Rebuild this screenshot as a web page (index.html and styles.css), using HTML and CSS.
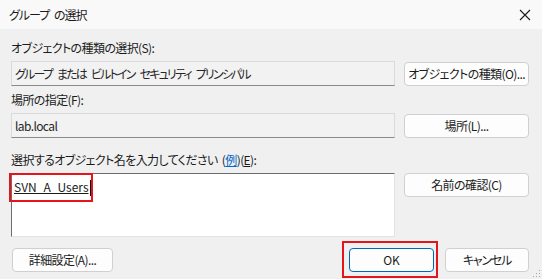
FILE: index.html
```html
<!DOCTYPE html>
<html>
<head>
    <title>グループ の選択</title>
    <link rel="stylesheet" href="styles.css">
</head>
<body>
    <div class="titlebar">
        <span class="title">グループ の選択</span>
        <svg class="close" width="12" height="12" viewBox="0 0 12 12">
            <path d="M1 1 L11 11 M11 1 L1 11" stroke="#1b1b1b" stroke-width="1.1" fill="none"/>
        </svg>
    </div>

    <div class="main">
        <div class="group">
            <div class="label">オブジェクトの種類の選択(S):</div>
            <div class="row">
                <div class="field kana">グループ または ビルトイン セキュリティ プリンシパル</div>
                <button class="btn side">オブジェクトの種類(O)...</button>
            </div>
        </div>

        <div class="group g2">
            <div class="label">場所の指定(F):</div>
            <div class="row">
                <div class="field">lab.local</div>
                <button class="btn side">場所(L)...</button>
            </div>
        </div>

        <div class="group g3">
            <div class="label">選択するオブジェクト名を入力してください (<span class="link">例</span>)(<u>E</u>):</div>
            <div class="row">
                <div class="names">
                    <span class="name">SVN_A_Users</span><span class="caret"></span>
                    <span class="mark mark-name"></span>
                </div>
                <button class="btn side">名前の確認(C)</button>
            </div>
        </div>

        <div class="footer">
            <button class="btn adv">詳細設定(A)...</button>
            <div class="actions">
                <div class="ok-wrap">
                    <button class="btn ok">OK</button>
                    <span class="mark mark-ok"></span>
                </div>
                <button class="btn cancel">キャンセル</button>
            </div>
        </div>
    </div>

    <!-- size grip -->
    <svg class="grip" width="9" height="9" viewBox="0 0 9 9">
        <rect x="7" y="1" width="1" height="1" fill="#a8a8a8"/>
        <rect x="4" y="4" width="1" height="1" fill="#a8a8a8"/>
        <rect x="7" y="4" width="1" height="1" fill="#a8a8a8"/>
        <rect x="1" y="7" width="1" height="1" fill="#a8a8a8"/>
        <rect x="4" y="7" width="1" height="1" fill="#a8a8a8"/>
        <rect x="7" y="7" width="1" height="1" fill="#a8a8a8"/>
    </svg>
</body>
</html>
```

FILE: styles.css
```css
body { margin: 0; background: #f0f0f0; font-family: "Noto Sans CJK JP", "Noto Sans", sans-serif; font-size: 12px; color: #1b1b1b; font-feature-settings: "palt"; letter-spacing: -0.6px; word-spacing: 2px; height: 279px; position: relative; overflow: hidden; }

.titlebar { height: 29px; background: #f9f9f9; display: flex; align-items: center; justify-content: space-between; padding: 0 11px 0 9px; }
.title { line-height: 16px; letter-spacing: -1px; word-spacing: 3px; }
.close { display: block; }

.main { padding: 11px 13px 0 11px; }
.label { line-height: 16px; margin-bottom: 5px; }
.g2 { margin-top: 6px; }
.g3 { margin-top: 14px; }
.row { display: flex; align-items: flex-start; gap: 9px; }

.field { width: 384px; height: 25px; box-sizing: border-box; border: 1px solid #dadada; border-bottom-color: #8a8a8a; background: #f2f2f2; padding: 0 3px; line-height: 23px; color: #262626; white-space: nowrap; }
.kana { letter-spacing: -1.8px; word-spacing: 4px; }

.btn { font: inherit; font-feature-settings: "palt"; letter-spacing: inherit; word-spacing: inherit; color: #1b1b1b; background: #fdfdfd; border: 1px solid #d0d0d0; border-radius: 4px; height: 24px; padding: 0; box-sizing: border-box; line-height: 22px; white-space: nowrap; }
.side { width: 125px; margin-top: 1px; }
.g3 .side { margin-top: 0; }

.link { color: #0066cc; text-decoration: underline; }

.names { position: relative; width: 384px; height: 64px; box-sizing: border-box; background: #fff; border: 1px solid #e3e3e3; border-top-color: #6e6e6e; border-left-color: #6e6e6e; padding: 5px 2px; line-height: 16px; letter-spacing: 0; }
.name { text-decoration: underline; }
.caret { display: inline-block; width: 1px; height: 16px; background: #000; vertical-align: -4px; margin-left: 1px; }

.mark { position: absolute; border: 2px solid #e4161b; box-sizing: border-box; pointer-events: none; }
.mark-name { left: -3px; top: -1px; width: 84px; height: 29px; }

.footer { display: flex; justify-content: space-between; margin-top: 11px; }
.adv { width: 101px; margin-left: 1px; }
.actions { display: flex; gap: 11px; }
.ok-wrap { position: relative; }
.ok { width: 85px; border-color: #0067c0; display: block; letter-spacing: 0; }
.mark-ok { left: -7px; top: -7px; width: 96px; height: 37px; }
.cancel { width: 84px; letter-spacing: -1.2px; }

.grip { position: absolute; right: 1px; bottom: 1px; }
```
